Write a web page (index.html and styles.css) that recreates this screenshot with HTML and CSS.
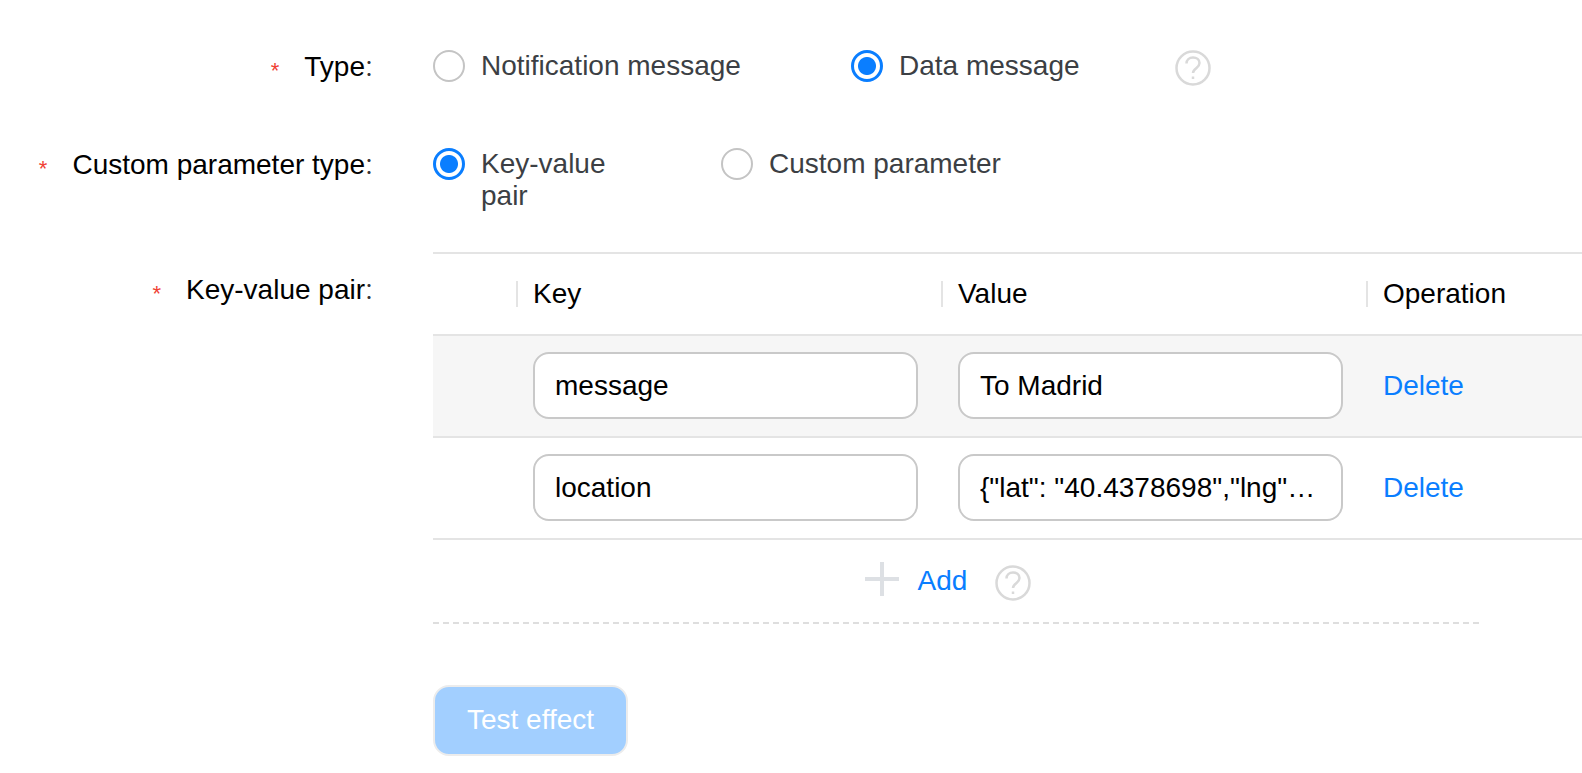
FILE: index.html
```html
<!DOCTYPE html>
<html>

<head>
    <title>Test effect</title>
    <link rel="stylesheet" href="styles.css">
</head>

<body>
    <form class="form">
        <div class="row row-type">
            <label class="label"><span class="star">*</span>Type<span class="colon">：</span></label>
            <div class="radios">
                <span class="radio radio-notify"><i class="dot"></i><span>Notification message</span></span>
                <span class="radio radio-data"><i class="dot on"></i><span>Data message</span></span>
                <svg class="help" viewBox="0 0 36 36">
                    <circle cx="18" cy="18" r="16.5" />
                    <path d="M11.500 13.500c0-3.700 2.800-6 6.500-6s6.500 2.300 6.500 5.500c0 2.300-1.200 3.500-3 4.900-2 1.500-3.500 2.700-3.500 5.100" />
                    <path d="M18 26.500v2.500" />
                </svg>
            </div>
        </div>

        <div class="row row-param">
            <label class="label"><span class="star">*</span>Custom parameter type<span class="colon">：</span></label>
            <div class="radios">
                <span class="radio radio-pair"><i class="dot on"></i><span>Key-value<br>pair</span></span>
                <span class="radio"><i class="dot"></i><span>Custom parameter</span></span>
            </div>
        </div>

        <div class="row row-table">
            <label class="label label-table"><span class="star">*</span>Key-value pair<span class="colon">：</span></label>
            <div class="content">
                <table class="pairs">
                    <tr>
                        <th class="col-blank"></th>
                        <th class="col-main"><span class="head">Key</span></th>
                        <th class="col-main"><span class="head">Value</span></th>
                        <th><span class="head">Operation</span></th>
                    </tr>
                    <tr class="hover">
                        <td></td>
                        <td><input class="input" value="message"></td>
                        <td><input class="input" value="To Madrid"></td>
                        <td><a class="link">Delete</a></td>
                    </tr>
                    <tr>
                        <td></td>
                        <td><input class="input" value="location"></td>
                        <td><input class="input" value='{"lat": "40.4378698","lng": "-3.8196207"}'></td>
                        <td><a class="link">Delete</a></td>
                    </tr>
                </table>

                <div class="add">
                    <svg class="plus" viewBox="0 0 34 34">
                        <path d="M17 0v34M0 17h34" />
                    </svg>
                    <a class="link">Add</a>
                    <svg class="help help-add" viewBox="0 0 36 36">
                        <circle cx="18" cy="18" r="16.5" />
                        <path d="M11.500 13.500c0-3.700 2.800-6 6.500-6s6.500 2.300 6.500 5.500c0 2.300-1.200 3.500-3 4.900-2 1.500-3.500 2.700-3.500 5.100" />
                        <path d="M18 26.500v2.500" />
                    </svg>
                </div>

                <button class="submit" type="button" disabled>Test effect</button>
            </div>
        </div>
    </form>
</body>

</html>
```

FILE: styles.css
```css
html,
body {
    margin: 0;
    background: #fff;
    overflow: hidden;
}

body {
    font-family: "Liberation Sans", Arial, sans-serif;
    font-size: 28px;
    color: #000;
}

.form {
    padding-top: 50px;
}

.row {
    display: flex;
}

.row-type {
    height: 98px;
}

.row-param {
    height: 104px;
}

.label {
    width: 393px;
    flex: none;
    text-align: right;
    line-height: 34px;
    white-space: nowrap;
}

.label-table {
    padding-top: 21px;
}

.star {
    color: #f04134;
    font-size: 22px;
    margin-right: 25px;
    position: relative;
    top: 2px;
}

.colon {
    font-family: "Noto Sans CJK SC", sans-serif;
    font-size: 24px;
    font-weight: 300;
    color: #333;
    display: inline-block;
    width: 28px;
    text-align: left;
    margin-left: -2px;
    margin-right: 2px;
    line-height: 1;
}

.radios {
    display: flex;
    align-items: flex-start;
    margin-left: 40px;
    color: #3c3f44;
    line-height: 32px;
}

.radio {
    display: flex;
    align-items: flex-start;
    gap: 16px;
}

.radio-notify {
    width: 418px;
}

.radio-data {
    width: 324px;
}

.radio-pair {
    width: 288px;
}

.dot {
    width: 32px;
    height: 32px;
    box-sizing: border-box;
    border: 2px solid #c4c4c4;
    border-radius: 50%;
    flex: none;
    background: #fff;
}

.dot.on {
    border: 3px solid #0a7eff;
    background: radial-gradient(circle, #0a7eff 0 8.5px, #fff 9.5px);
}

.help {
    width: 36px;
    height: 36px;
    flex: none;
    fill: none;
    stroke: #d9d9d9;
    stroke-width: 2.5;
}

.content {
    margin-left: 40px;
    width: 1149px;
    flex: none;
}

.pairs {
    width: 1149px;
    table-layout: fixed;
    border-collapse: collapse;
    border-top: 2px solid #e4e4e4;
}

.pairs th {
    height: 80px;
    padding: 0;
    font-weight: normal;
    text-align: left;
}

.col-blank {
    width: 83px;
}

.col-main {
    width: 425px;
}

.head {
    display: block;
    line-height: 26px;
    padding-left: 15px;
    border-left: 2px solid #e4e4e4;
}

.pairs td {
    height: 100px;
    padding: 0 0 0 17px;
    border-top: 2px solid #e4e4e4;
}

.pairs tr:last-child td {
    border-bottom: 2px solid #e4e4e4;
}

.hover td {
    background: #f6f6f6;
}

.input {
    display: block;
    box-sizing: border-box;
    width: 385px;
    height: 67px;
    margin-bottom: 2px;
    padding: 2px 20px 0;
    border: 2px solid #c9c9c9;
    border-radius: 16px;
    background: #fff;
    font: inherit;
    color: #000;
    text-overflow: ellipsis;
}

.link {
    color: #0a7eff;
}

.add {
    display: flex;
    align-items: center;
    justify-content: center;
    width: 1030px;
    height: 82px;
    padding-right: 16px;
    border-bottom: 2px dashed #dedede;
}

.plus {
    width: 34px;
    height: 34px;
    margin: -4px 19px 0 0;
    fill: none;
    stroke: #dde0e4;
    stroke-width: 4;
}

.help-add {
    margin: 3px 0 0 28px;
}

.submit {
    display: block;
    margin-top: 61px;
    box-sizing: border-box;
    width: 195px;
    height: 71px;
    padding-bottom: 2px;
    border: 2px solid #ececec;
    border-radius: 16px;
    background: #a2cfff;
    color: #fff;
    font: inherit;
}
```
